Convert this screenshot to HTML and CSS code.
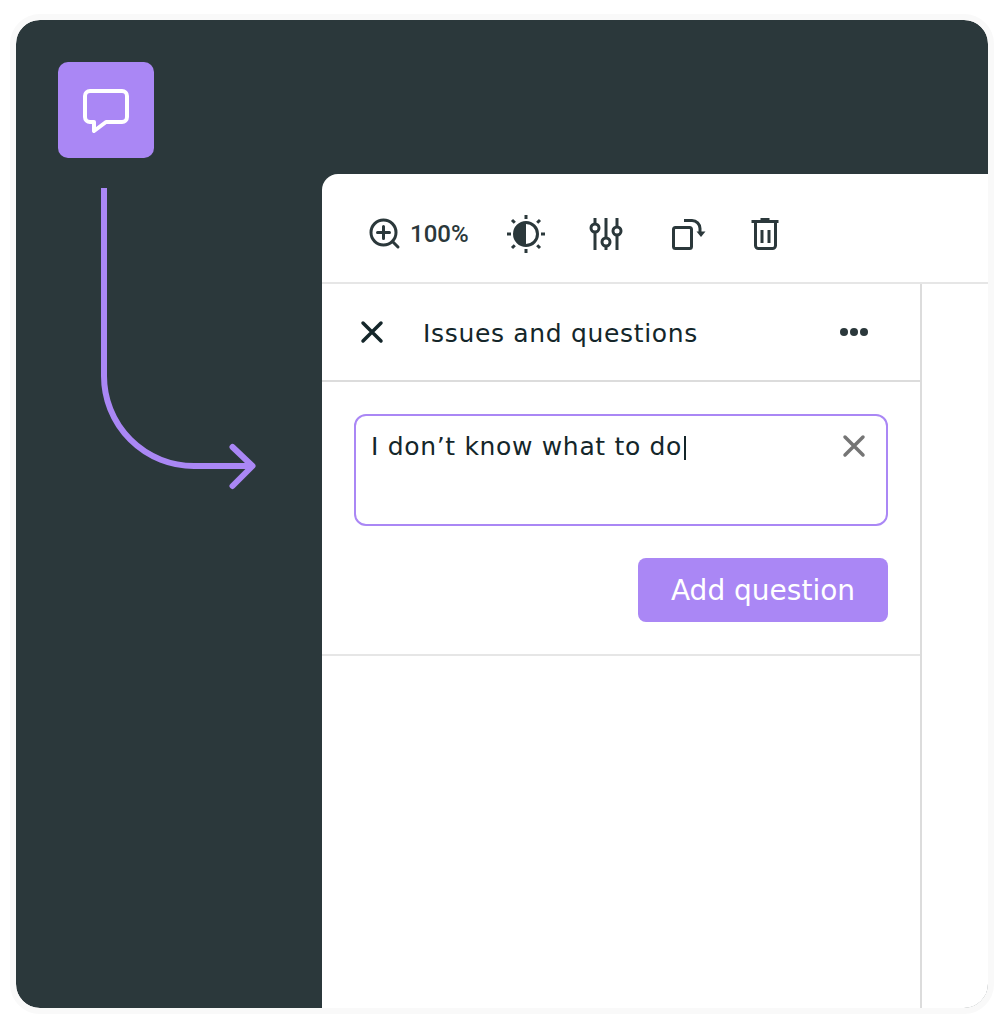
FILE: index.html
```html
<!DOCTYPE html>
<html>
<head>
    <title>Issues and questions</title>
    <link rel="stylesheet" href="styles.css">
</head>
<body>
    <div class="frame">
        <div class="rail">
            <div class="tile">
                <svg width="48" height="48" viewBox="0 0 48 48" fill="none" stroke="#fff" stroke-width="4" stroke-linejoin="round">
                    <path d="M3 10 a5 5 0 0 1 5-5 h32 a5 5 0 0 1 5 5 v21 a5 5 0 0 1-5 5 H24 L12 45 v-9 h-4 a5 5 0 0 1-5-5 z"/>
                </svg>
            </div>
            <svg class="arrow" width="160" height="304" viewBox="0 0 160 304" fill="none" stroke="#aa87f5" stroke-width="6" stroke-linecap="round" stroke-linejoin="round">
                <path d="M5 0 V188 A90 90 0 0 0 95 278 H153" stroke-linecap="butt"/>
                <path d="M133.500 259 L153.500 278 L133.500 298"/>
            </svg>
        </div>

        <div class="panel">
            <div class="toolbar">
                <div class="zoom">
                    <svg width="32" height="32" viewBox="0 0 32 32" fill="none" stroke="#2b383b" stroke-width="3" stroke-linecap="round">
                        <circle cx="14.500" cy="14.500" r="12.500"/>
                        <path d="M14.500 8.500 v12 M8.500 14.500 h12 M24 24 l5 5"/>
                    </svg>
                    <span>100%</span>
                </div>
                <svg class="sun" width="42" height="42" viewBox="0 0 42 42" fill="none" stroke="#2b383b" stroke-width="3">
                    <circle cx="21" cy="21" r="11.500"/>
                    <path d="M21 9.500 a11.500 11.500 0 0 0 0 23 z" fill="#2b383b" stroke="none"/>
                    <path d="M21 2 v4 M21 36 v4 M2 21 h4 M36 21 h4 M7 7 l2.800 2.800 M32.200 32.200 l2.800 2.800 M7 35 l2.800-2.800 M32.200 9.800 l2.800-2.800"/>
                </svg>
                <svg class="sliders" width="34" height="36" viewBox="0 0 34 36" fill="none" stroke="#2b383b" stroke-width="3">
                    <path d="M6 2 v6 M6 16 v18 M17 2 v20 M17 30 v4 M28 2 v9 M28 19 v15"/>
                    <circle cx="6" cy="12" r="4"/>
                    <circle cx="17" cy="26" r="4"/>
                    <circle cx="28" cy="15" r="4"/>
                </svg>
                <svg class="rotate" width="38" height="32" viewBox="0 0 38 32" fill="none" stroke="#2b383b" stroke-width="3">
                    <rect x="4.500" y="9.500" width="18" height="21" rx="2"/>
                    <path d="M15 2.500 h8 a8 8 0 0 1 8 8 v4"/>
                    <path d="M27.500 13.500 h9 l-4.500 5.500 z" fill="#2b383b" stroke="none"/>
                </svg>
                <svg class="trash" width="30" height="34" viewBox="0 0 30 34" fill="none" stroke="#2b383b" stroke-width="3">
                    <path d="M1.500 4.500 h27"/>
                    <path d="M10.500 1 h9 v2 h-9 z" fill="#2b383b" stroke="none"/>
                    <path d="M5.500 6 v22.500 a3 3 0 0 0 3 3 h14 a3 3 0 0 0 3-3 V6"/>
                    <path d="M12 13 v13 M19 13 v13"/>
                </svg>
            </div>

            <div class="content">
                <div class="sidebar">
                    <div class="side-head">
                        <svg class="close" width="26" height="26" viewBox="0 0 26 26" fill="none" stroke="#14262a" stroke-width="3.500" stroke-linecap="round">
                            <path d="M4 4 L22 22 M22 4 L4 22"/>
                        </svg>
                        <span class="side-title">Issues and questions</span>
                        <div class="dots"><i></i><i></i><i></i></div>
                    </div>
                    <div class="question">
                        <div class="input-box">
                            <span class="input-text">I don’t know what to do</span><span class="caret"></span>
                            <svg class="clear" width="26" height="26" viewBox="0 0 26 26" fill="none" stroke="#757575" stroke-width="3.500" stroke-linecap="round">
                                <path d="M4 4 L22 22 M22 4 L4 22"/>
                            </svg>
                        </div>
                        <button class="add-btn">Add question</button>
                    </div>
                </div>
                <div class="canvas"></div>
            </div>
        </div>
    </div>
</body>
</html>
```
FILE: styles.css
```css
body {
    margin: 0;
    background: #FFFFFF;
    font-family: 'DejaVu Sans', sans-serif;
    color: #14262a;
}

.frame {
    display: flex;
    box-sizing: border-box;
    width: 984px;
    height: 1000px;
    margin: 14px 0 0 10px;
    border: 6px solid #f9f9f9;
    border-radius: 30px;
    background: #2b383b;
    background-clip: padding-box;
    overflow: hidden;
}

.rail {
    flex: none;
    width: 306px;
    padding: 42px 0 0 42px;
    box-sizing: border-box;
}

.tile {
    display: flex;
    align-items: center;
    justify-content: center;
    width: 96px;
    height: 96px;
    border-radius: 10px;
    background: #aa87f5;
}

.arrow {
    display: block;
    margin: 30px 0 0 41px;
}

.panel {
    flex: 1;
    display: flex;
    flex-direction: column;
    margin-top: 154px;
    background: #FFFFFF;
    border-top-left-radius: 16px;
}

.toolbar {
    flex: none;
    display: flex;
    align-items: center;
    box-sizing: border-box;
    height: 110px;
    padding: 12px 0 0 47px;
    border-bottom: 2px solid #e6e6e6;
}

.zoom {
    display: flex;
    align-items: center;
    gap: 9px;
    font-family: 'Roboto', sans-serif;
    font-weight: 500;
    font-size: 24px;
    color: #2b383b;
}

.sun {
    margin-left: 36px;
}

.sliders {
    margin-left: 42px;
}

.rotate {
    margin-left: 46px;
}

.trash {
    margin-left: 43px;
}

.content {
    flex: 1;
    display: flex;
}

.sidebar {
    width: 598px;
    border-right: 2px solid #dcdcdc;
}

.side-head {
    display: flex;
    align-items: center;
    height: 96px;
    padding: 0 32px 0 37px;
    border-bottom: 2px solid #dcdcdc;
}

.side-title {
    flex: 1;
    margin: 2px 0 0 38px;
    font-size: 25px;
    letter-spacing: 0.67px;
}

.dots {
    display: flex;
    gap: 2px;
    margin-right: 20px;
    margin-top: -1px;
}

.dots i {
    width: 8px;
    height: 8px;
    border-radius: 50%;
    background: #2b383b;
}

.question {
    display: flex;
    flex-direction: column;
    align-items: flex-end;
    padding: 32px;
    border-bottom: 2px solid #e6e6e6;
}

.input-box {
    position: relative;
    box-sizing: border-box;
    width: 534px;
    height: 112px;
    padding: 16px 15px;
    border: 2px solid #aa87f5;
    border-radius: 12px;
    font-size: 25px;
    line-height: 29px;
    letter-spacing: 0.67px;
}

.caret {
    display: inline-block;
    width: 2px;
    height: 24px;
    margin-left: 2px;
    vertical-align: -5px;
    background: #14262a;
}

.clear {
    position: absolute;
    top: 17px;
    right: 19px;
}

.add-btn {
    width: 250px;
    height: 64px;
    margin-top: 32px;
    border: none;
    border-radius: 8px;
    background: #aa87f5;
    color: #FFFFFF;
    font-family: 'DejaVu Sans', sans-serif;
    font-size: 28px;
}

.canvas {
    flex: 1;
}
```
